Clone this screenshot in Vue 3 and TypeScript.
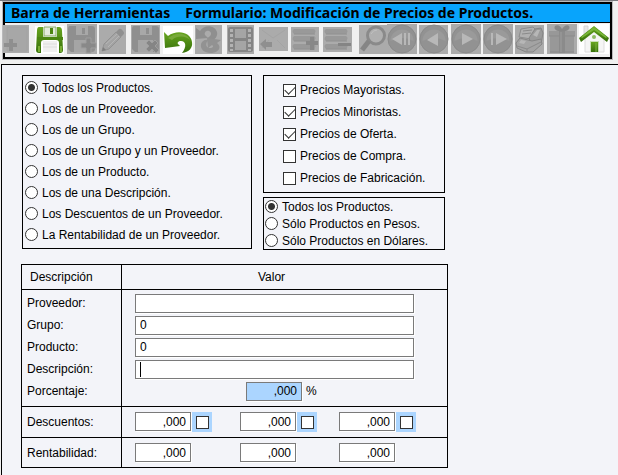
<script setup lang="ts">
import { ref } from 'vue'

interface Shape {
  d: string
  fill?: string
  stroke?: string
  width?: number
}

interface Tool {
  label: string
  enabled?: boolean
  tile: [number, number, number, number]
  shapes: Shape[]
}

interface Option {
  label: string
  checked: boolean
}

const dark = '#8f8f8f'
const light = '#b8b8b8'
const tileGray = '#ababab'
const green = 'url(#green)'

const floppy: Shape[] = [
  { d: 'M3 2H25Q28 2 28 5V25Q28 28 25 28H4L1 25V5Q1 2 3 2Z', fill: dark },
  { d: 'M9 2H21V11H9Z', fill: '#a8a8a8' },
  { d: 'M15 4H18V10H15Z', fill: dark },
  { d: 'M7 16H22V28H7Z', fill: '#a5a5a5' },
]

const disc: Shape = { d: 'M15 1A14 14 0 1 1 15 29A14 14 0 1 1 15 1Z', fill: '#929292', stroke: '#8a8a8a', width: 1 }
const discGlow: Shape = { d: 'M3.500 17A11.500 11.500 0 0 1 26.500 17Q15 11 3.500 17Z', fill: '#9a9a9a' }

const tools: Tool[] = [
  {
    label: 'Nuevo',
    tile: [0, 1, 26, 28],
    shapes: [
      { d: 'M4 3H24V27H4Z', fill: '#a7a7a7', stroke: '#a2a2a2', width: 1 },
      { d: 'M6 15H10V19H14V23H10V27H6V23H1V19H6Z', fill: dark },
    ],
  },
  {
    label: 'Guardar',
    enabled: true,
    tile: [0, 2, 29, 28],
    shapes: [
      { d: 'M4 3H8V12Q8 13 10 13H20Q22 13 22 12V3H24Q27 3 27 7L28 26Q28 29 25 29H24V19Q24 16 21 16H9Q6 16 6 19V29H4Q1 29 1 26L2 7Q2 3 4 3Z', fill: green },
      { d: 'M9 3H21V12H9Z', fill: '#e3ebdc', stroke: '#86a967', width: 1 },
      { d: 'M15 4H18V10H15Z', fill: '#4d8512' },
      { d: 'M8 17H22V28H8Z', fill: '#f0f0f0' },
      { d: 'M8 20H22M8 23H22', stroke: '#dedede', width: 1 },
      { d: 'M2 13H28V16H2Z', fill: '#4b8611' },
      { d: 'M3 22H5V28H3ZM25 22H27V28H25Z', fill: '#79ae35' },
    ],
  },
  {
    label: 'Guardar y agregar',
    tile: [0, 0, 30, 30],
    shapes: [...floppy, { d: 'M19 14H24V19H29V24H24V29H19V24H14V19H19Z', fill: '#898989', stroke: '#9e9e9e', width: 1 }],
  },
  {
    label: 'Modificar',
    tile: [0, 1, 27, 29],
    shapes: [
      { d: 'M3 27L5 20L17 8L22 13L10 25Z', fill: '#a3a3a3', stroke: '#929292', width: 1 },
      { d: 'M17 8L20 5Q22 4 24 7Q26 9 24 11L22 13Z', fill: dark },
      { d: 'M7 20L18 10M9 23L20 12', stroke: '#b5b5b5', width: 1 },
      { d: 'M3 27L4 23L7 26Z', fill: '#7e7e7e' },
    ],
  },
  {
    label: 'Borrar',
    tile: [0, 1, 29, 29],
    shapes: [...floppy, { d: 'M15 19L18 16L21 19L24 16L27 19L24 22L28 26L25 29L21 25L18 28L15 25L18 22Z', fill: '#858585', stroke: '#9e9e9e', width: 1 }],
  },
  {
    label: 'Deshacer',
    enabled: true,
    tile: [0, 2, 30, 28],
    shapes: [
      { d: 'M1 8L5 12C14 5 28 8 29 18C30 24 26 28 19 29C24 23 23 17 18 17C15 17 14 19 15 20L17 22L2 24Z', fill: green },
      { d: 'M5 14C14 7 24 9 27 16C23 12 15 11 9 16', fill: '#78a93a' },
    ],
  },
  {
    label: 'Actualizar',
    tile: [0, 1, 27, 29],
    shapes: [
      { d: 'M1 4L5 7C9 0 20 1 22 8C23 12 20 16 16 17L12 14C17 12 17 8 14 7C11 6 9 9 10 11L13 14L1 15Z', fill: dark },
      { d: 'M12 14L26 16L22 19C28 24 22 29 16 29C9 29 5 25 6 20C7 17 10 15 13 16C10 20 11 24 15 24C18 24 19 22 17 21L13 24Z', fill: '#929292' },
    ],
  },
  {
    label: 'Película',
    tile: [0, 1, 27, 29],
    shapes: [
      { d: 'M3 3H24Q26 3 26 5V26Q26 28 24 28H3Q1 28 1 26V5Q1 3 3 3Z', fill: '#858585' },
      { d: 'M8 5H19V14H8ZM8 17H19V26H8Z', fill: '#a5a5a5' },
      { d: 'M3 5H6V8H3ZM3 10H6V13H3ZM3 15H6V18H3ZM3 20H6V23H3ZM3 25H6V27H3ZM21 5H24V8H21ZM21 10H24V13H21ZM21 15H24V18H21ZM21 20H24V23H21ZM21 25H24V27H21Z', fill: '#b3b3b3' },
    ],
  },
  {
    label: 'Volver',
    tile: [0, 3, 29, 24],
    shapes: [
      { d: 'M3 6L14 14L26 6M3 24L10 16M26 24L18 16', stroke: '#a4a4a4', width: 1 },
      { d: 'M1 20L7 15V18H13V23H7V26Z', fill: dark },
    ],
  },
  {
    label: 'Agregar renglón',
    tile: [0, 3, 28, 25],
    shapes: [
      { d: 'M3 5H23Q26 7 23 10H3Q0 7 3 5ZM3 12H23Q26 14 23 17H3Q0 15 3 12ZM3 20H23Q26 22 23 25H3Q0 22 3 20Z', fill: '#999999' },
      { d: 'M3 10H24M3 17H24M3 25H24', stroke: '#909090', width: 1 },
      { d: 'M19 13H23V17H27V21H23V26H19V21H15V17H19Z', fill: '#888888' },
    ],
  },
  {
    label: 'Quitar renglón',
    tile: [0, 3, 29, 25],
    shapes: [
      { d: 'M3 5H23Q26 7 23 10H3Q0 7 3 5ZM3 12H23Q26 14 23 17H3Q0 15 3 12ZM3 20H23Q26 22 23 25H3Q0 22 3 20Z', fill: '#999999' },
      { d: 'M3 10H24M3 17H24M3 25H24', stroke: '#909090', width: 1 },
      { d: 'M15 19H28V22H15Z', fill: '#858585' },
    ],
  },
  {
    label: 'Buscar',
    tile: [4, 1, 28, 29],
    shapes: [
      { d: 'M21 3A8.500 8.500 0 1 1 21 20A8.500 8.500 0 1 1 21 3Z', fill: '#b0b0b0', stroke: '#8a8a8a', width: 3 },
      { d: 'M14 17L7 26', stroke: '#858585', width: 5 },
      { d: 'M16 10Q18 6 22 6', stroke: '#c0c0c0', width: 1 },
    ],
  },
  {
    label: 'Primero',
    tile: [0, 0, 30, 30],
    shapes: [disc, discGlow, { d: 'M15 9V21L5 15ZM17 9H19V21H17ZM21 9H23V21H21Z', fill: light }],
  },
  {
    label: 'Anterior',
    tile: [0, 1, 29, 29],
    shapes: [disc, discGlow, { d: 'M19 9V22L8 16Z', fill: light }],
  },
  {
    label: 'Siguiente',
    tile: [0, 0, 30, 30],
    shapes: [disc, discGlow, { d: 'M11 9V21L22 15Z', fill: light }],
  },
  {
    label: 'Último',
    tile: [0, 0, 30, 30],
    shapes: [disc, discGlow, { d: 'M8 9H10V21H8ZM13 9V21L24 15Z', fill: light }],
  },
  {
    label: 'Imprimir',
    tile: [0, 1, 29, 29],
    shapes: [
      { d: 'M6 5L18 3L21 6L16 15L4 13Z', fill: '#b0b0b0', stroke: '#8c8c8c', width: 1 },
      { d: 'M14 14L20 5L26 4L28 9L26 20L17 22Z', fill: '#9a9a9a', stroke: '#858585', width: 1 },
      { d: 'M1 19L5 14L17 17L26 15L27 20L18 28L11 28L2 24Z', fill: '#a3a3a3', stroke: '#858585', width: 1 },
      { d: 'M8 7L17 6M7 10L16 9M2 22L12 25L26 18M12 25V28', stroke: '#8a8a8a', width: 1 },
      { d: 'M6 16L11 17L9 20L4 19ZM18 11L22 6L25 6L22 13Z', fill: '#b7b7b7' },
    ],
  },
  {
    label: 'Ofertas',
    tile: [0, 0, 30, 30],
    shapes: [
      { d: 'M2 7H28V12H27V29H3V12H2Z', fill: '#989898' },
      { d: 'M2 12H28M3 28H27', stroke: '#8b8b8b', width: 1 },
      { d: 'M12 7H18V29H12Z', fill: '#8b8b8b' },
      { d: 'M15 7C10 8 6 5 8 2C11 0 14 3 15 5C16 3 20 0 22 2C24 5 20 8 15 7Z', fill: '#878787' },
      { d: 'M14 8V28', stroke: '#9d9d9d', width: 1 },
    ],
  },
  {
    label: 'Inicio',
    enabled: true,
    tile: [0, 0, 30, 30],
    shapes: [
      { d: 'M5 2H9V10H5Z', fill: '#e7e7e7', stroke: '#d5d5d5', width: 1 },
      { d: 'M6 13L15 6L25 13V28H6Z', fill: '#f5f5f5', stroke: '#dddddd', width: 1 },
      { d: 'M15 2L30 14L28 18L15 8L2 18L0 14Z', fill: green },
      { d: 'M15 3L28 13L27 14L15 6L3 14L2 13Z', fill: '#79b638' },
      { d: 'M15 11A2 2 0 1 1 15 15A2 2 0 1 1 15 11Z', fill: '#8dbb62' },
      { d: 'M11 17H20V28H11Z', fill: '#c9dfb4' },
      { d: 'M12 18H19V28H12Z', fill: green },
      { d: 'M17 19V28', stroke: '#7db33f', width: 1 },
    ],
  },
]

const scopes: string[] = [
  'Todos los Productos.',
  'Los de un Proveedor.',
  'Los de un Grupo.',
  'Los de un Grupo y un Proveedor.',
  'Los de un Producto.',
  'Los de una Descripción.',
  'Los Descuentos de un Proveedor.',
  'La Rentabilidad de un Proveedor.',
]
const scope = ref(0)

const prices = ref<Option[]>([
  { label: 'Precios Mayoristas.', checked: true },
  { label: 'Precios Minoristas.', checked: true },
  { label: 'Precios de Oferta.', checked: true },
  { label: 'Precios de Compra.', checked: false },
  { label: 'Precios de Fabricación.', checked: false },
])

const currencies: string[] = ['Todos los Productos.', 'Sólo Productos en Pesos.', 'Sólo Productos en Dólares.']
const currency = ref(0)

const fields = ref([
  { id: 'proveedor', label: 'Proveedor:', value: '' },
  { id: 'grupo', label: 'Grupo:', value: '0' },
  { id: 'producto', label: 'Producto:', value: '0' },
  { id: 'descripcion', label: 'Descripción:', value: '' },
])
const percentage = ref(',000')
const discounts = ref([
  { value: ',000', active: false },
  { value: ',000', active: false },
  { value: ',000', active: false },
])
const margins = ref([',000', ',000', ',000'])
</script>

<template>
  <div class="window">
    <header class="toolbar-area">
      <div class="toolbar">
        <h1 class="title">
          <span>Barra de Herramientas</span>
          <span>Formulario: Modificación de Precios de Productos.</span>
        </h1>
        <div class="tools" role="toolbar">
          <button v-for="tool in tools" :key="tool.label" class="tool" type="button" :aria-label="tool.label" :disabled="!tool.enabled">
            <svg viewBox="0 0 32 30" width="32" height="30" aria-hidden="true">
              <defs v-if="tool.label === 'Guardar'">
                <linearGradient id="green" x1="0" y1="0" x2="0" y2="1">
                  <stop offset="0" stop-color="#67a51e" />
                  <stop offset="1" stop-color="#37700b" />
                </linearGradient>
              </defs>
              <rect :x="tool.tile[0]" :y="tool.tile[1]" :width="tool.tile[2]" :height="tool.tile[3]" :fill="tool.enabled ? '#ffffff' : tileGray" />
              <path v-for="(s, i) in tool.shapes" :key="i" :d="s.d" :fill="s.fill ?? 'none'" :stroke="s.stroke ?? 'none'" :stroke-width="s.width ?? 0" />
            </svg>
          </button>
        </div>
      </div>
    </header>

    <main class="form">
      <div class="options">
        <div class="panel scopes" role="radiogroup" aria-label="Productos">
          <label v-for="(text, i) in scopes" :key="text" class="choice">
            <input v-model="scope" type="radio" name="scope" :value="i" />
            {{ text }}
          </label>
        </div>
        <div class="side">
          <div class="panel prices" role="group" aria-label="Precios">
            <label v-for="item in prices" :key="item.label" class="choice">
              <input v-model="item.checked" type="checkbox" />
              {{ item.label }}
            </label>
          </div>
          <div class="panel currencies" role="radiogroup" aria-label="Moneda">
            <label v-for="(text, i) in currencies" :key="text" class="choice">
              <input v-model="currency" type="radio" name="currency" :value="i" />
              {{ text }}
            </label>
          </div>
        </div>
      </div>

      <table class="values">
        <thead>
          <tr>
            <th scope="col">Descripción</th>
            <th scope="col">Valor</th>
          </tr>
        </thead>
        <tbody class="main-rows">
          <tr v-for="field in fields" :key="field.id">
            <th scope="row"><label :for="field.id">{{ field.label }}</label></th>
            <td>
              <div class="field" :class="{ editing: field.id === 'descripcion' }">
                <input :id="field.id" v-model="field.value" class="box wide" type="text" />
              </div>
            </td>
          </tr>
          <tr>
            <th scope="row"><label for="porcentaje">Porcentaje:</label></th>
            <td>
              <div class="percentage">
                <input id="porcentaje" v-model="percentage" class="box number selected" type="text" />
                <span>%</span>
              </div>
            </td>
          </tr>
        </tbody>
        <tbody class="discount-row">
          <tr>
            <th scope="row">Descuentos:</th>
            <td>
              <div class="numbers">
                <div v-for="(item, i) in discounts" :key="i" class="pair">
                  <input v-model="item.value" class="box number" type="text" :aria-label="`Descuento ${i + 1}`" />
                  <label class="mark"><input v-model="item.active" type="checkbox" :aria-label="`Aplicar descuento ${i + 1}`" /></label>
                </div>
              </div>
            </td>
          </tr>
        </tbody>
        <tbody class="margin-row">
          <tr>
            <th scope="row">Rentabilidad:</th>
            <td>
              <div class="numbers">
                <div v-for="(_, i) in margins" :key="i" class="pair">
                  <input v-model="margins[i]" class="box number" type="text" :aria-label="`Rentabilidad ${i + 1}`" />
                </div>
              </div>
            </td>
          </tr>
        </tbody>
      </table>
    </main>
  </div>
</template>

<style>
body {
  margin: 0;
  background: #f0f0f0;
}
</style>

<style scoped>
* {
  box-sizing: border-box;
}

.window {
  display: flex;
  flex-direction: column;
  min-height: 100vh;
  color: #000000;
  font: 12px/16px "Liberation Sans", Arial, sans-serif;
}

.toolbar-area {
  padding: 1px 6px 5px 3px;
  border-top: 1px solid #77777c;
}

.toolbar {
  border: 2px solid #000000;
  outline: 1px solid #b9b9bb;
}

.title {
  display: flex;
  gap: 15px;
  margin: 0;
  padding-left: 6px;
  height: 19px;
  background: #08a4fc;
  border-bottom: 1px solid #000000;
  font: bold 14px/18px "Noto Sans", "Open Sans", sans-serif;
  white-space: nowrap;
}

.tools {
  display: grid;
  grid-template-columns: repeat(19, 1fr);
  margin: 0 -1px 0 -2px;
  padding: 1px 0 3px;
}

.tool {
  display: flex;
  min-width: 0;
  padding: 0;
  border: 0;
  background: none;
}

.tool svg {
  flex: none;
}

.form {
  flex: 1;
  margin-left: 1px;
  padding: 10px 20px 7px;
  border-top: 1px solid #000000;
  border-left: 1px solid #000000;
  background: #f3f4f9;
}

.options {
  display: flex;
  align-items: flex-start;
  gap: 11px;
}

.panel {
  display: flex;
  flex-direction: column;
  border: 1px solid #000000;
}

.scopes {
  width: 230px;
  padding: 1px 2px 3px;
}

.side {
  display: flex;
  flex-direction: column;
  gap: 4px;
  width: 182px;
}

.prices {
  padding: 3px 0 3px 19px;
}

.currencies {
  padding: 0 1px;
}

.choice {
  display: flex;
  align-items: center;
  gap: 4px;
  height: 21px;
  white-space: nowrap;
}

.prices .choice {
  height: 22px;
}

.currencies .choice {
  height: 17px;
}

input[type='radio'],
input[type='checkbox'] {
  appearance: none;
  flex: none;
  width: 13px;
  height: 13px;
  margin: 0;
  border: 1px solid #333333;
  background: #ffffff;
}

input[type='radio'] {
  border-radius: 50%;
}

input[type='radio']:checked {
  background: radial-gradient(circle, #333333 3px, #ffffff 4px);
}

input[type='checkbox']:checked {
  display: grid;
  place-items: center;
}

input[type='checkbox']:checked::before {
  content: '';
  width: 9px;
  height: 5px;
  margin-bottom: 3px;
  border: solid #333333;
  border-width: 0 0 1px 1px;
  transform: rotate(-45deg);
}

.values {
  width: 427px;
  margin: 14px 0 0 -1px;
  border: 1px solid #000000;
  border-collapse: separate;
  border-spacing: 0;
  table-layout: fixed;
}

th,
td {
  padding: 0;
  font-weight: normal;
  text-align: left;
}

th:first-child {
  width: 100px;
  padding-left: 5px;
  border-right: 1px solid #000000;
}

td {
  padding-left: 13px;
}

thead th {
  height: 25px;
  border-bottom: 1px solid #000000;
}

thead th:first-child {
  padding-left: 8px;
}

thead th:last-child {
  padding-right: 26px;
  text-align: center;
}

.main-rows tr {
  height: 22px;
}

.main-rows tr:first-child {
  height: 24px;
}

.main-rows tr:first-child > * {
  padding-top: 2px;
}

.main-rows tr:last-child {
  height: 27px;
}

.main-rows tr:last-child > * {
  padding-bottom: 4px;
  border-bottom: 1px solid #000000;
}

.discount-row th,
.discount-row td {
  height: 31px;
  border-bottom: 1px solid #000000;
}

.margin-row tr {
  height: 29px;
}

.field,
.percentage,
.pair {
  display: flex;
}

.field {
  position: relative;
  margin-right: 33px;
}

.editing::after {
  content: '';
  position: absolute;
  top: 2px;
  left: 5px;
  width: 1px;
  height: 15px;
  background: #000000;
}

.box {
  width: 56px;
  height: 19px;
  padding: 0 4px;
  border: 1px solid #7a7a7a;
  background: #ffffff;
  box-shadow: 1px 1px 0 #ffffff;
  color: inherit;
  font: inherit;
}

.box.wide {
  width: 100%;
}

.box.number {
  text-align: right;
}

.box.selected {
  background: #abd5ff;
}

.percentage {
  align-items: center;
  gap: 4px;
  padding-left: 111px;
}

.numbers {
  display: grid;
  grid-template-columns: 105px 99px 1fr;
}

.pair {
  gap: 1px;
}

.mark {
  display: grid;
  place-items: center;
  width: 20px;
  height: 20px;
  background: #abd5ff;
}
</style>
